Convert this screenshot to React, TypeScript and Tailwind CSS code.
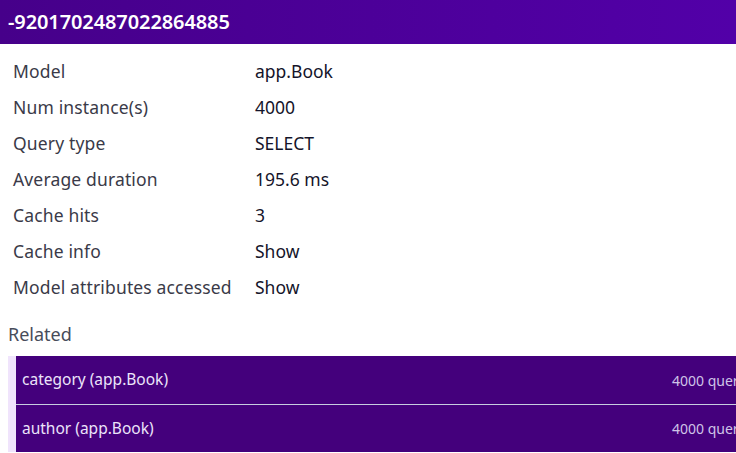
import React from "react";

const rows: [string, string][] = [
  ["Model", "app.Book"],
  ["Num instance(s)", "4000"],
  ["Query type", "SELECT"],
  ["Average duration", "195.6 ms"],
  ["Cache hits", "3"],
  ["Cache info", "Show"],
  ["Model attributes accessed", "Show"],
];

const related = ["category (app.Book)", "author (app.Book)"];

export default function App() {
  return (
    <div
      className="w-[736px] h-[453px] overflow-hidden bg-white"
      style={{ fontFamily: "'Noto Sans', 'Open Sans', sans-serif" }}
    >
      <div className="h-[44px] flex items-center px-[8px] bg-gradient-to-r from-[#46008a] to-[#5200a8]">
        <span className="text-white text-[20px] font-semibold tracking-[-0.1px]">-9201702487022864885</span>
      </div>
      <div className="pt-[9px] pl-[8px]">
        {rows.map(([k, v]) => (
          <div key={k} className="flex h-[36px] items-center text-[17.5px]">
            <div className="w-[247px] flex-none pl-[5px] text-[#3a3a48] whitespace-nowrap tracking-[0.15px]">{k}</div>
            <div className="text-[#14142a]">{v}</div>
          </div>
        ))}
      </div>
      <div className="pl-[8px] mt-[11px] h-[36px] flex items-center text-[18px] text-[#474c5a]">Related</div>
      <div className="ml-[8px] mt-[4px] w-[780px] border-l-[8px] border-[#f0e4fc]">
        {related.map((r, i) => (
          <div
            key={r}
            className={
              "h-[48px] flex items-center bg-[#44007c] pl-[6px] " +
              (i > 0 ? "border-t border-[#c8cce0]" : "")
            }
          >
            <span className="w-[650px] flex-none text-[15.5px] text-[#ece4fa]">{r}</span>
            <span className="text-[14px] text-[#cfc4e8] whitespace-nowrap">4000 queries</span>
          </div>
        ))}
      </div>
    </div>
  );
}
